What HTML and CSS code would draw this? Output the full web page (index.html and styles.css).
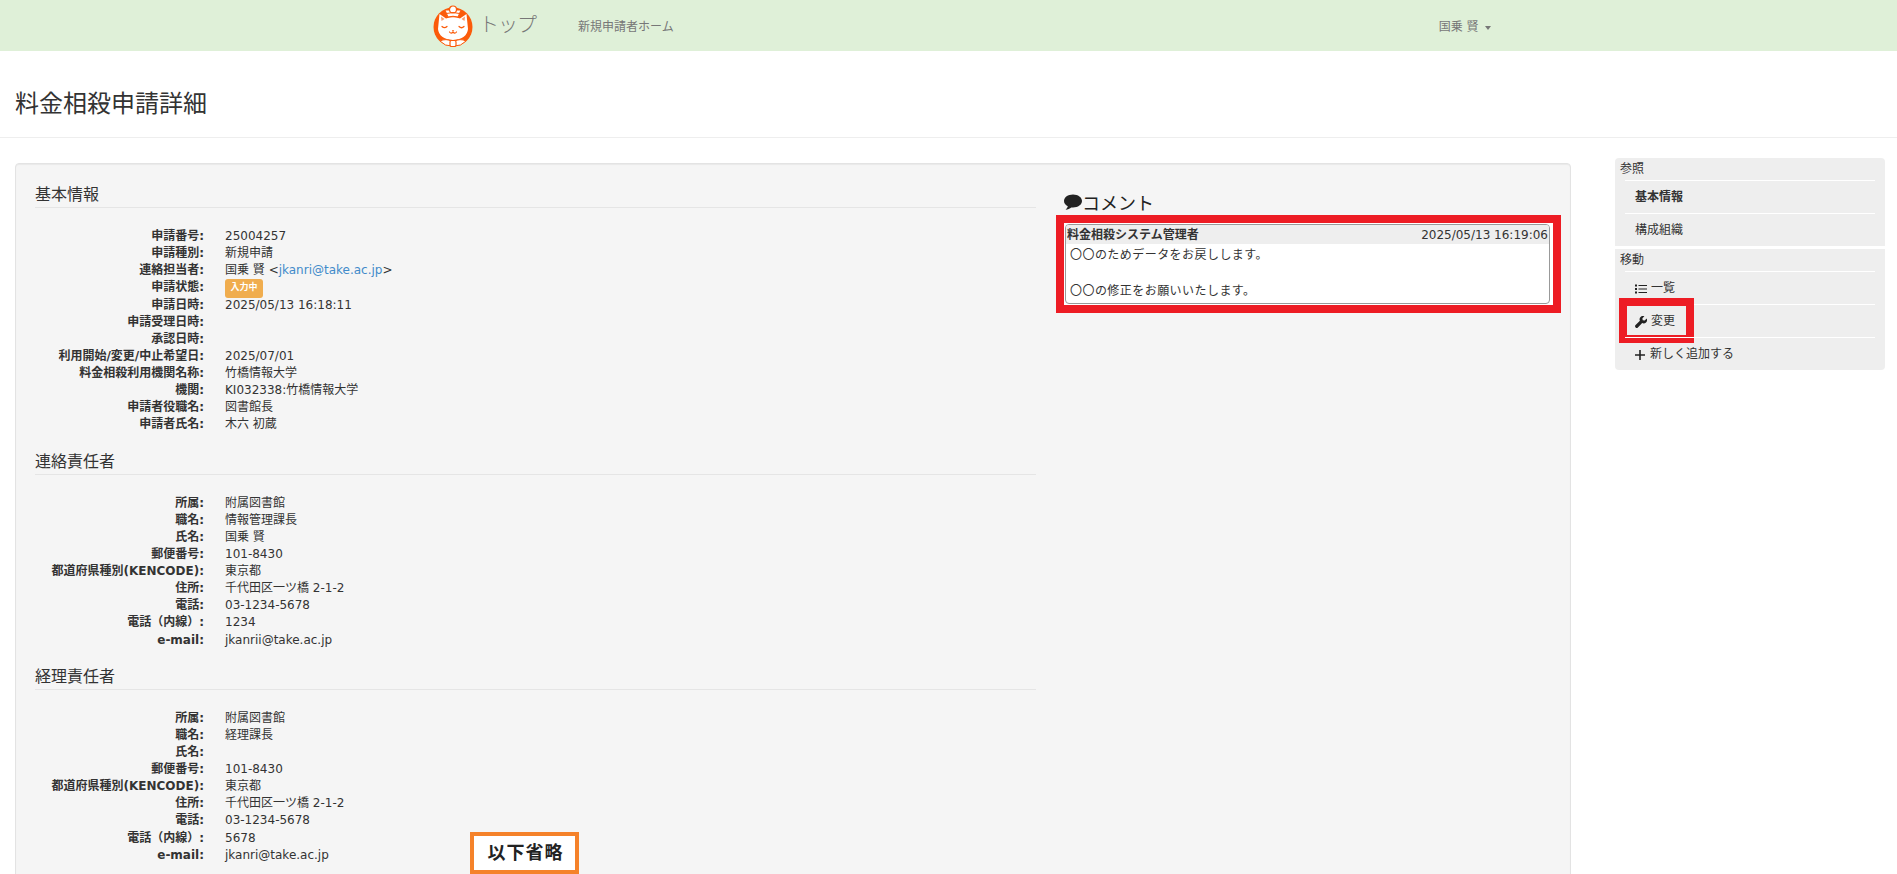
FILE: index.html
```html
<!DOCTYPE html>
<html lang="ja">
<head>
<meta charset="utf-8">
<title>料金相殺申請詳細</title>
<link rel="stylesheet" href="styles.css">
</head>
<body>
<nav class="navbar">
  <a class="brand">
    <svg class="logo" viewBox="0 0 42 42" aria-hidden="true">
      <circle cx="20" cy="22" r="19.500" fill="#fb5b0a"/>
      <path d="M6.500 9 13 13.500Q20 11 27 13.500L33.500 9 35 24Q34 34 20 35Q6 34 5 24Z" fill="#fff"/>
      <path d="M8 11.500 11.500 14 8.500 16ZM32 11.500 28.500 14 31.500 16Z" fill="#fb9a6a"/>
      <path d="M12 5h16l-3 7q-5-1.500-10 0Z" fill="#fff" stroke="#fb5b0a" stroke-width="1"/>
      <circle cx="20" cy="4.500" r="3.500" fill="#fff" stroke="#fb5b0a" stroke-width="1.200"/>
      <path d="M13.500 8.500q6.500-2 13 0" fill="none" stroke="#fb5b0a" stroke-width="1"/>
      <path d="M9 21.500q2.500 2.500 5 0M26 21.500q2.500 2.500 5 0M16.500 27q1.700 2.200 3.500 0q1.800 2.200 3.500 0" fill="none" stroke="#fb5b0a" stroke-width="1.200" stroke-linecap="round"/>
      <path d="M18.800 25h2.400l-1.200 1.300Z" fill="#fb5b0a"/>
      <path d="M7 36q6-3 12 .5v4.500q-7 .5-12-5ZM33 36q-6-3-12 .5v4.500q7 .5 12-5Z" fill="#fff" stroke="#fb5b0a" stroke-width="1"/>
      <rect x="17" y="35.500" width="6" height="6" rx="1.500" fill="#fff" stroke="#fb5b0a" stroke-width="1.200"/>
    </svg>
    <span class="brand-text">トップ</span>
  </a>
  <a class="nav-link">新規申請者ホーム</a>
  <a class="nav-user">国乗 賢<i class="caret"></i></a>
</nav>

<header class="page-header"><h1>料金相殺申請詳細</h1></header>

<div class="content">
  <main class="well">
    <div class="details">
      <section>
        <h2>基本情報</h2>
        <dl>
          <dt>申請番号:</dt><dd>25004257</dd>
          <dt>申請種別:</dt><dd>新規申請</dd>
          <dt>連絡担当者:</dt><dd>国乗 賢 &lt;<a class="mail">jkanri@take.ac.jp</a>&gt;</dd>
          <dt>申請状態:</dt><dd><span class="badge">入力中</span></dd>
          <dt>申請日時:</dt><dd>2025/05/13 16:18:11</dd>
          <dt>申請受理日時:</dt><dd></dd>
          <dt>承認日時:</dt><dd></dd>
          <dt>利用開始/変更/中止希望日:</dt><dd>2025/07/01</dd>
          <dt>料金相殺利用機関名称:</dt><dd>竹橋情報大学</dd>
          <dt>機関:</dt><dd>KI032338:竹橋情報大学</dd>
          <dt>申請者役職名:</dt><dd>図書館長</dd>
          <dt>申請者氏名:</dt><dd>木六 初蔵</dd>
        </dl>
      </section>
      <section>
        <h2>連絡責任者</h2>
        <dl>
          <dt>所属:</dt><dd>附属図書館</dd>
          <dt>職名:</dt><dd>情報管理課長</dd>
          <dt>氏名:</dt><dd>国乗 賢</dd>
          <dt>郵便番号:</dt><dd>101-8430</dd>
          <dt>都道府県種別(KENCODE):</dt><dd>東京都</dd>
          <dt>住所:</dt><dd>千代田区一ツ橋 2-1-2</dd>
          <dt>電話:</dt><dd>03-1234-5678</dd>
          <dt>電話（内線）:</dt><dd>1234</dd>
          <dt>e-mail:</dt><dd>jkanrii@take.ac.jp</dd>
        </dl>
      </section>
      <section>
        <h2>経理責任者</h2>
        <dl>
          <dt>所属:</dt><dd>附属図書館</dd>
          <dt>職名:</dt><dd>経理課長</dd>
          <dt>氏名:</dt><dd></dd>
          <dt>郵便番号:</dt><dd>101-8430</dd>
          <dt>都道府県種別(KENCODE):</dt><dd>東京都</dd>
          <dt>住所:</dt><dd>千代田区一ツ橋 2-1-2</dd>
          <dt>電話:</dt><dd>03-1234-5678</dd>
          <dt>電話（内線）:</dt><dd>5678</dd>
          <dt>e-mail:</dt><dd>jkanri@take.ac.jp</dd>
        </dl>
      </section>
      <div class="omitted">以下省略</div>
    </div>

    <aside class="comments">
      <h3 class="comments-title">
        <svg class="bubble" viewBox="0 0 18 18" aria-hidden="true"><path d="M9 1.500C4 1.500 0 4.300 0 8c0 2.300 1.500 4.200 3.800 5.300-.3 1.300-1.100 2.500-2.300 3.400 2.400-.2 4.400-1.100 5.800-2.300.5.100 1.100.1 1.700.1 5 0 9-2.900 9-6.500S14 1.500 9 1.500Z"/></svg>コメント
      </h3>
      <div class="comment-frame">
        <article class="comment">
          <header class="comment-head"><b>料金相殺システム管理者</b><span>2025/05/13 16:19:06</span></header>
          <p>〇〇のためデータをお戻しします。</p>
          <p class="blank"></p>
          <p>〇〇の修正をお願いいたします。</p>
        </article>
        <span class="mark-red"></span>
      </div>
    </aside>
  </main>

  <div class="sidebar">
    <div class="side-group side-first">
      <div class="side-title">参照</div>
      <a class="side-item active">基本情報</a>
      <a class="side-item">構成組織</a>
    </div>
    <div class="side-group side-last">
      <div class="side-title">移動</div>
      <a class="side-item">
        <svg class="ico" viewBox="0 0 12 12" aria-hidden="true"><path d="M0 1.500h2v2H0ZM0 5h2v2H0ZM0 8.500h2v2H0ZM3.500 2h8.500v1H3.500ZM3.500 5.500h8.500v1H3.500ZM3.500 9h8.500v1H3.500Z"/></svg>一覧
      </a>
      <a class="side-item mark-host">
        <svg class="ico" viewBox="0 0 12 12" aria-hidden="true"><path d="M11.700 2.600 9.700 4.600 7.700 4.300 7.400 2.300 9.400.3A3.400 3.400 0 0 0 4.900 4.800L.6 9.100a1.600 1.600 0 0 0 2.300 2.300L7.200 7.100A3.400 3.400 0 0 0 11.700 2.600Z"/></svg>変更
        <span class="mark-red mark-edit"></span>
      </a>
      <a class="side-item">
        <svg class="ico ico-plus" viewBox="0 0 12 12" aria-hidden="true"><path d="M4.200 1h1.600v4.200H10v1.600H5.800V11H4.200V6.800H0V5.200h4.200Z"/></svg>新しく追加する
      </a>
    </div>
  </div>
</div>
</body>
</html>
```
FILE: styles.css
```css
* { box-sizing: border-box; }
html, body { margin: 0; height: 874px; overflow: hidden; }
body {
  font-family: "DejaVu Sans", "Noto Sans CJK JP", sans-serif;
  font-size: 12px;
  line-height: 17.14px;
  color: #333;
  background: #fff;
}
.navbar {
  height: 51px;
  background: #dff0d8;
  display: flex;
  align-items: center;
  padding-left: 433px;
  color: #777;
}
.brand { display: flex; align-items: center; }
.logo { width: 42px; height: 42px; display: block; }
.brand-text { font-size: 20px; letter-spacing: -1px; margin-left: 4px; margin-top: -4px; font-family: "Noto Sans CJK JP", sans-serif; font-weight: 300; }
.nav-link { margin-left: 42px; margin-top: 5px; }
.nav-user { margin-left: 765px; margin-top: 5px; }
.caret {
  display: inline-block;
  margin-left: 7px;
  vertical-align: middle;
  border-top: 4px solid #777;
  border-left: 3px solid transparent;
  border-right: 3px solid transparent;
}
.page-header {
  height: 87px;
  margin: 0;
  padding: 35px 15px 0;
  border-bottom: 1px solid #eee;
}
h1 { margin: 0; font-size: 24px; line-height: 32px; font-weight: 400; color: #333; font-family: "Noto Sans CJK JP", sans-serif; }
.content {
  display: flex;
  align-items: flex-start;
  gap: 44px;
  padding: 25px 0 0 15px;
}
.well {
  width: 1556px;
  height: 760px;
  flex: none;
  display: grid;
  grid-template-columns: 1001px 489px;
  column-gap: 28px;
  align-items: start;
  padding: 19px 17px 0 19px;
  background: #f5f5f5;
  border: 1px solid #e3e3e3;
  border-radius: 4px;
  box-shadow: inset 0 1px 1px rgba(0,0,0,.05);
}
.details { position: relative; }
section { margin-bottom: 16px; }
h2 {
  margin: 0 0 20px;
  padding-bottom: 3px;
  font-size: 16px;
  line-height: 21px;
  font-weight: 400;
  color: #333;
  border-bottom: 1px solid #e5e5e5;
  font-family: "Noto Sans CJK JP", sans-serif;
}
dl {
  margin: 0;
  display: grid;
  grid-template-columns: 169px 1fr;
  grid-auto-rows: 17.14px;
  column-gap: 21px;
}
dt { font-weight: 700; text-align: right; white-space: nowrap; }
dd { margin: 0; white-space: nowrap; }
.mail { color: #428bca; }
.badge {
  display: block;
  width: 38px;
  height: 19px;
  background: #f0ad4e;
  color: #fff;
  border-radius: 3px;
  font-size: 9px;
  font-weight: 700;
  line-height: 17px;
  text-align: center;
}
.omitted {
  position: absolute;
  left: 435px;
  top: 649px;
  width: 109px;
  height: 42px;
  border: 4px solid #f5822a;
  padding-left: 2px;
  background: #fff;
  color: #222;
  font-size: 18px;
  font-weight: 700;
  line-height: 30px;
  text-align: center;
  letter-spacing: 1px;
  font-family: "Noto Sans CJK JP", sans-serif;
}
.comments-title {
  margin: 9px 0 11px;
  display: flex;
  align-items: center;
  font-size: 18px;
  line-height: 20px;
  font-weight: 400;
  color: #222;
  font-family: "Noto Sans CJK JP", sans-serif;
}
.bubble { width: 18px; height: 18px; fill: #222; }
.comment-frame {
  position: relative;
  height: 82px;
  padding: 1px 3px 1px 1px;
  background: #fff;
}
.comment {
  height: 80px;
  border: 1px solid #999;
  border-radius: 4px;
  overflow: hidden;
}
.comment-head {
  display: flex;
  justify-content: space-between;
  margin-bottom: 2px;
  padding: 2px 1px 0 1px;
  height: 19px;
  background: #eee;
  color: #333;
}
.comment p { margin: 0; padding-left: 4px; line-height: 18px; letter-spacing: .45px; color: #333; white-space: nowrap; }
.comment .blank { height: 18px; }
.mark-red {
  position: absolute;
  inset: -8px;
  border: 8px solid #ed1c24;
  pointer-events: none;
}
.sidebar { width: 270px; flex: none; margin-top: -5px; display: flex; flex-direction: column; gap: 3px; }
.side-group { background: #eee; }
.side-first { border-radius: 4px 4px 0 0; height: 88px; }
.side-last { border-radius: 0 0 4px 4px; height: 121px; }
.side-title { padding: 3px 5px 0; height: 22px; color: #333; line-height: 17px; }
.side-item {
  display: flex;
  align-items: center;
  position: relative;
  height: 33px;
  margin: 0 10px;
  padding: 2px 0 0 10px;
  color: #333;
  border-top: 1px solid #fff;
}
.active { font-weight: 700; }
.ico { width: 12px; height: 12px; fill: #222; margin-right: 4px; flex: none; }
.ico-plus { margin-right: 3px; }
.mark-edit {
  inset: auto;
  left: -6px;
  top: -7px;
  width: 75px;
  height: 45px;
}
```
